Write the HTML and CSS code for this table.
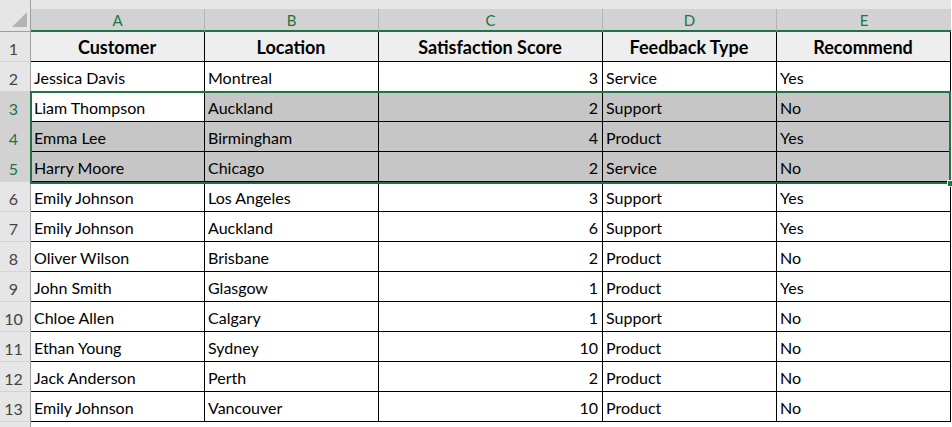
FILE: index.html
```html
<!DOCTYPE html>
<html>
<head>
<meta charset="utf-8">
<link rel="stylesheet" href="styles.css">
</head>
<body>
<div class="sheet">
  <div class="corner"><span class="tri"></span></div>
  <div class="strip"></div>
  <div class="colhead">A</div>
  <div class="colhead">B</div>
  <div class="colhead">C</div>
  <div class="colhead">D</div>
  <div class="colhead last">E</div>

  <div class="rowhead">1</div>
  <div class="cell hdr">Customer</div>
  <div class="cell hdr">Location</div>
  <div class="cell hdr">Satisfaction Score</div>
  <div class="cell hdr">Feedback Type</div>
  <div class="cell hdr">Recommend</div>

  <div class="rowhead">2</div>
  <div class="cell">Jessica Davis</div>
  <div class="cell">Montreal</div>
  <div class="cell num">3</div>
  <div class="cell">Service</div>
  <div class="cell">Yes</div>

  <div class="rowhead sel">3</div>
  <div class="cell">Liam Thompson</div>
  <div class="cell gray">Auckland</div>
  <div class="cell gray num">2</div>
  <div class="cell gray">Support</div>
  <div class="cell gray">No</div>

  <div class="rowhead sel">4</div>
  <div class="cell gray">Emma Lee</div>
  <div class="cell gray">Birmingham</div>
  <div class="cell gray num">4</div>
  <div class="cell gray">Product</div>
  <div class="cell gray">Yes</div>

  <div class="rowhead sel">5</div>
  <div class="cell gray">Harry Moore</div>
  <div class="cell gray">Chicago</div>
  <div class="cell gray num">2</div>
  <div class="cell gray">Service</div>
  <div class="cell gray">No</div>

  <div class="rowhead">6</div>
  <div class="cell">Emily Johnson</div>
  <div class="cell">Los Angeles</div>
  <div class="cell num">3</div>
  <div class="cell">Support</div>
  <div class="cell">Yes</div>

  <div class="rowhead">7</div>
  <div class="cell">Emily Johnson</div>
  <div class="cell">Auckland</div>
  <div class="cell num">6</div>
  <div class="cell">Support</div>
  <div class="cell">Yes</div>

  <div class="rowhead">8</div>
  <div class="cell">Oliver Wilson</div>
  <div class="cell">Brisbane</div>
  <div class="cell num">2</div>
  <div class="cell">Product</div>
  <div class="cell">No</div>

  <div class="rowhead">9</div>
  <div class="cell">John Smith</div>
  <div class="cell">Glasgow</div>
  <div class="cell num">1</div>
  <div class="cell">Product</div>
  <div class="cell">Yes</div>

  <div class="rowhead">10</div>
  <div class="cell">Chloe Allen</div>
  <div class="cell">Calgary</div>
  <div class="cell num">1</div>
  <div class="cell">Support</div>
  <div class="cell">No</div>

  <div class="rowhead">11</div>
  <div class="cell">Ethan Young</div>
  <div class="cell">Sydney</div>
  <div class="cell num">10</div>
  <div class="cell">Product</div>
  <div class="cell">No</div>

  <div class="rowhead">12</div>
  <div class="cell">Jack Anderson</div>
  <div class="cell">Perth</div>
  <div class="cell num">2</div>
  <div class="cell">Product</div>
  <div class="cell">No</div>

  <div class="rowhead">13</div>
  <div class="cell">Emily Johnson</div>
  <div class="cell">Vancouver</div>
  <div class="cell num">10</div>
  <div class="cell">Product</div>
  <div class="cell">No</div>

  <div class="rowhead tail"></div>

  <div class="selection"><span class="handle"></span></div>
</div>
</body>
</html>
```

FILE: styles.css
```css
* { box-sizing: border-box; }
html, body {
  margin: 0;
  padding: 0;
  background: #ffffff;
}
body {
  font-family: Lato, "Open Sans", "Liberation Sans", sans-serif;
  font-size: 16px;
  color: #000;
  overflow: hidden;
}
.sheet {
  position: relative;
  display: grid;
  grid-template-columns: 31px 174px 174px 224px 174px 174px;
  grid-template-rows: 9px 23px repeat(13, 30px) 5px;
  width: 952px;
}
.corner {
  grid-row: 1 / 3;
  grid-column: 1;
  background: #e6e6e6;
  border-right: 1px solid #9e9e9e;
  border-bottom: 1px solid #9e9e9e;
  position: relative;
}
.tri {
  position: absolute;
  right: 3px;
  bottom: 4px;
  width: 0;
  height: 0;
  border-left: 15px solid transparent;
  border-bottom: 15px solid #b4b4b4;
}
.strip {
  grid-row: 1;
  grid-column: 2 / 7;
  background: #e6e6e6;
}
.colhead {
  background: #d2d2d2;
  color: #217346;
  border-right: 1px solid #b4b4b4;
  border-bottom: 2px solid #217346;
  display: flex;
  align-items: center;
  justify-content: center;
  font-size: 15px;
  padding-top: 1px;
}
.colhead.last { border-right: none; }
.rowhead {
  background: #e6e6e6;
  color: #444;
  border-right: 1px solid #9e9e9e;
  border-bottom: 1px solid #d4d4d4;
  display: flex;
  align-items: flex-end;
  justify-content: center;
  padding-bottom: 3px;
  padding-right: 3px;
  font-size: 16px;
}
.rowhead.sel {
  background: #d2d2d2;
  color: #217346;
}
.rowhead.tail { border-bottom: none; }
.cell {
  border-right: 1px solid #000;
  border-bottom: 1px solid #000;
  display: flex;
  align-items: flex-end;
  padding: 0 4px 4px 3px;
  white-space: nowrap;
  overflow: hidden;
  background: #fff;
}
.cell.hdr {
  background: #eeeeee;
  font-weight: 700;
  justify-content: center;
  font-size: 18px;
  padding-bottom: 3px;
}
.cell.num { justify-content: flex-end; }
.cell.gray { background: #c6c6c6; }
.selection {
  position: absolute;
  left: 30px;
  top: 91px;
  width: 921px;
  height: 93px;
  border: 2px solid #217346;
  pointer-events: none;
}
.handle {
  position: absolute;
  right: -5px;
  bottom: -5px;
  width: 7px;
  height: 7px;
  background: #217346;
  border: 1px solid #fff;
}
```
